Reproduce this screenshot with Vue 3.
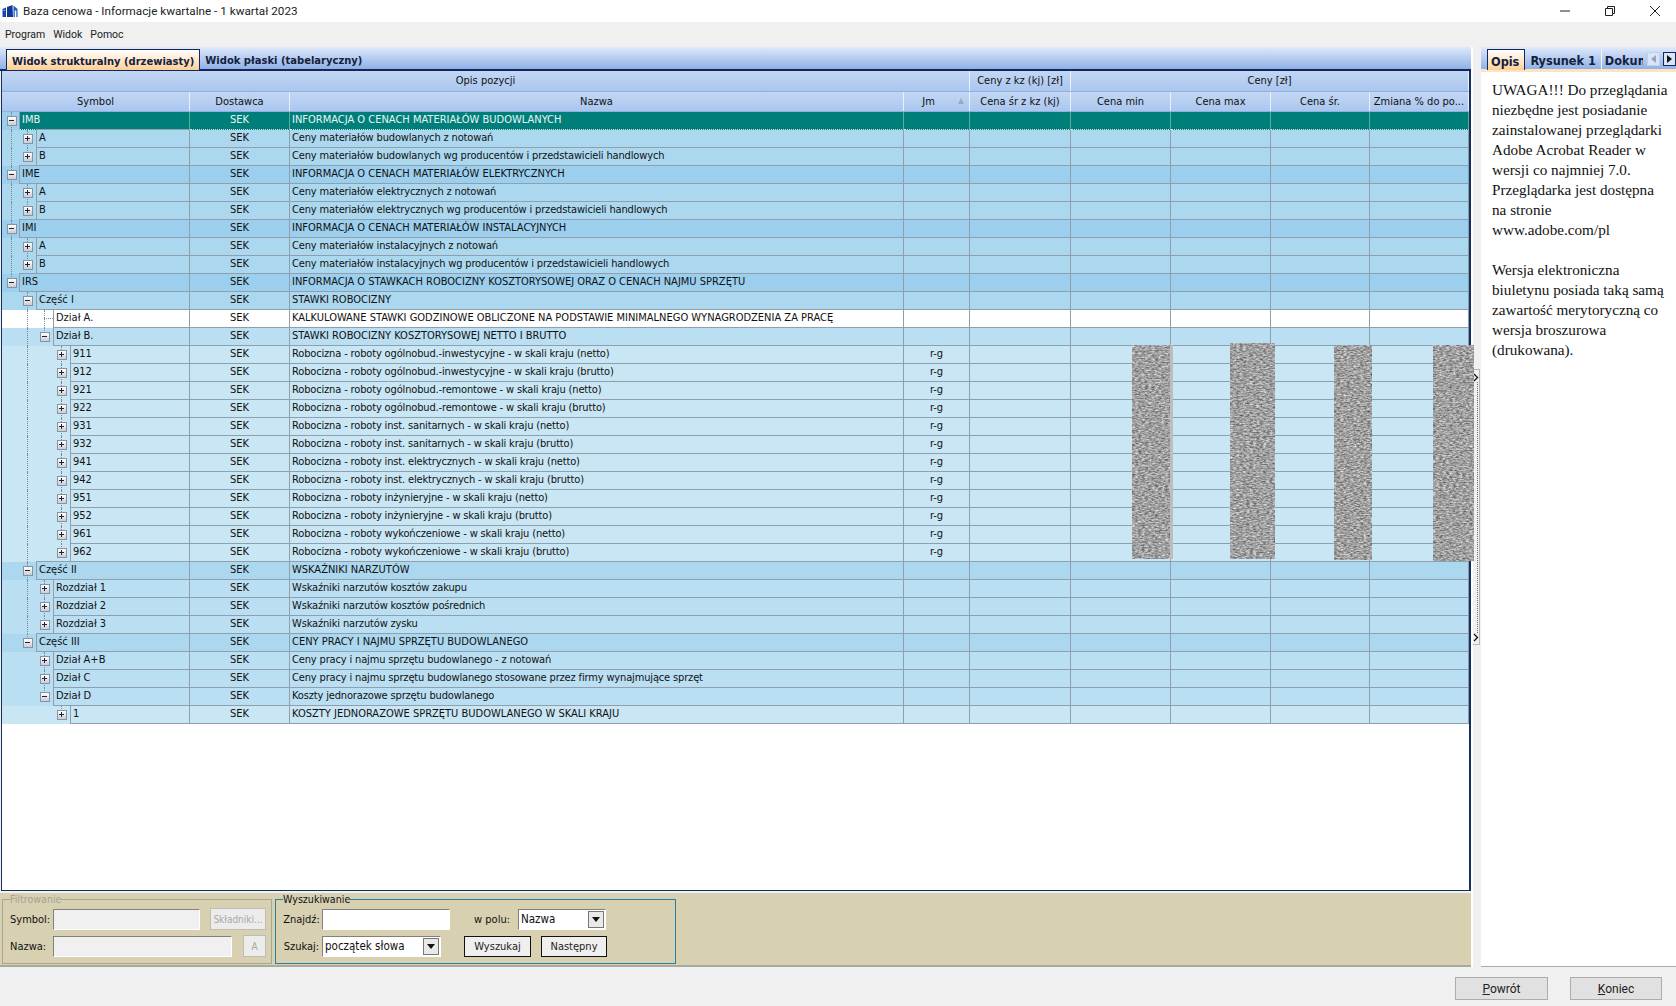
<template>
  <div class="app">
    <div class="titlebar">
      <svg class="appicon" width="17" height="14" viewBox="0 0 17 14">
        <path d="M0.5 5 4 3.5V13H0.5z" fill="#1446a8" />
        <path d="M5 3 10.5 1 11 13H5z" fill="#0f3796" />
        <path d="M11.5 1.5 15.5 5V13h-4z" fill="#1f5cc4" />
        <path d="M12.8 6.5h1.5V13h-1.5zM1.6 6.2l1.2-.6v1l-1.2.5z" fill="#fff" />
      </svg>
      <span class="apptitle">Baza cenowa - Informacje kwartalne - 1 kwartał 2023</span>
      <div class="winbtns">
        <svg width="12" height="12" viewBox="0 0 12 12"><path d="M1 6h10" stroke="#222" fill="none" /></svg>
        <svg width="12" height="12" viewBox="0 0 12 12"><path d="M1.5 3.5h7v7h-7zM3.5 3.5v-2h7v7h-2" stroke="#222" fill="none" /></svg>
        <svg width="12" height="12" viewBox="0 0 12 12"><path d="M1 1l10 10M11 1L1 11" stroke="#222" fill="none" /></svg>
      </div>
    </div>
    <div class="menubar">
      <span>Program</span><span>Widok</span><span>Pomoc</span>
    </div>

    <div class="main">
      <div class="leftcol">
        <div class="tabstrip">
          <div class="tab active">Widok strukturalny (drzewiasty)</div>
          <div class="tab">Widok płaski (tabelaryczny)</div>
        </div>

        <div class="grid">
          <div class="hrow top">
            <div class="hcell span4">Opis pozycji</div>
            <div class="hcell">Ceny z kz (kj) [zł]</div>
            <div class="hcell span4b">Ceny [zł]</div>
          </div>
          <div class="hrow">
            <div v-for="h in headers" :key="h" class="hcell" :class="{ sorted: h === 'Jm' }">{{ h }}</div>
          </div>

          <div class="body">
            <div
              v-for="(r, i) in rows"
              :key="i"
              class="row"
              :class="['lv' + r.level, { selected: i === 0, white: r.white }]"
            >
              <i v-for="g in r.guides" :key="g.k" class="guide" :class="['g' + g.k, { half: g.half }]"></i>
              <div class="cell tree">
                <span v-if="r.box" class="box" :class="{ plus: r.box === '+' }"></span>
                <i v-else class="stub"></i>
                <span class="sym">{{ r.symbol }}</span>
              </div>
              <div class="cell center">SEK</div>
              <div class="cell" :class="{ lower: !r.caps }">{{ r.name }}</div>
              <div class="cell center">{{ r.jm }}</div>
              <div class="cell"></div>
              <div class="cell"></div>
              <div class="cell"></div>
              <div class="cell"></div>
              <div class="cell"></div>
            </div>

            <svg v-for="n in 4" :key="n" class="redact" :class="'b' + n" preserveAspectRatio="none">
              <filter :id="'noise' + n" x="0" y="0" width="100%" height="100%" color-interpolation-filters="sRGB">
                <feTurbulence type="fractalNoise" baseFrequency="0.3 0.75" numOctaves="3" :seed="n * 3" />
                <feColorMatrix values="0.75 0 0 0 0.25  0.75 0 0 0 0.25  0.75 0 0 0 0.25  0 0 0 0 1" />
              </filter>
              <rect width="100%" height="100%" :filter="'url(#noise' + n + ')'" />
            </svg>
          </div>
        </div>

        <div class="filters">
          <fieldset class="group off">
            <legend>Filtrowanie</legend>
            <div class="line">
              <label class="lab1">Symbol:</label>
              <input class="inp i-sym" disabled />
              <button class="btn-off skl" disabled>Składniki...</button>
            </div>
            <div class="line">
              <label class="lab1 on">Nazwa:</label>
              <input class="inp i-naz" disabled />
              <button class="btn-off aa" disabled>A</button>
            </div>
          </fieldset>
          <fieldset class="group search">
            <legend>Wyszukiwanie</legend>
            <div class="line">
              <label class="lab2">Znajdź:</label>
              <input class="inp i-find" />
              <label class="lab3">w polu:</label>
              <div class="combo c-field">Nazwa<span class="drop"></span></div>
            </div>
            <div class="line">
              <label class="lab2">Szukaj:</label>
              <div class="combo c-mode">początek słowa<span class="drop"></span></div>
              <button class="btn b-search">Wyszukaj</button>
              <button class="btn b-next">Następny</button>
            </div>
          </fieldset>
        </div>
      </div>

      <div class="gutter">
        <div class="splitter">
          <svg width="6" height="9" viewBox="0 0 6 9"><path d="M1 1l3.5 3.5L1 8" stroke="#111" stroke-width="1.3" fill="none" /></svg>
          <div class="dots"></div>
          <svg width="6" height="9" viewBox="0 0 6 9"><path d="M1 1l3.5 3.5L1 8" stroke="#111" stroke-width="1.3" fill="none" /></svg>
        </div>
      </div>

      <div class="rightcol">
        <div class="tabstrip rtabs">
          <div class="tab active">Opis</div>
          <div class="tab sep">Rysunek 1</div>
          <div class="tab clip">Dokumenty</div>
          <div class="nav off"><i class="tri left"></i></div>
          <div class="nav"><i class="tri right"></i></div>
        </div>
        <div class="desc">{{ description }}</div>
      </div>
    </div>

    <div class="bottombar">
      <button class="wbtn"><u>P</u>owrót</button>
      <button class="wbtn"><u>K</u>oniec</button>
    </div>
  </div>
</template>

<script setup>
const headers = ['Symbol', 'Dostawca', 'Nazwa', 'Jm', 'Cena śr z kz (kj)', 'Cena min', 'Cena max', 'Cena śr.', 'Zmiana % do po...']

const description = `UWAGA!!! Do przeglądania
niezbędne jest posiadanie
zainstalowanej przeglądarki
Adobe Acrobat Reader w
wersji co najmniej 7.0.
Przeglądarka jest dostępna
na stronie
www.adobe.com/pl

Wersja elektroniczna
biuletynu posiada taką samą
zawartość merytoryczną co
wersja broszurowa
(drukowana).`

const raw = [
  [0, '-', 'IMB', 'INFORMACJA O CENACH MATERIAŁÓW BUDOWLANYCH'],
  [1, '+', 'A', 'Ceny materiałów budowlanych z notowań'],
  [1, '+', 'B', 'Ceny materiałów budowlanych wg producentów i przedstawicieli handlowych'],
  [0, '-', 'IME', 'INFORMACJA O CENACH MATERIAŁÓW ELEKTRYCZNYCH'],
  [1, '+', 'A', 'Ceny materiałów elektrycznych z notowań'],
  [1, '+', 'B', 'Ceny materiałów elektrycznych wg producentów i przedstawicieli handlowych'],
  [0, '-', 'IMI', 'INFORMACJA O CENACH MATERIAŁÓW INSTALACYJNYCH'],
  [1, '+', 'A', 'Ceny materiałów instalacyjnych z notowań'],
  [1, '+', 'B', 'Ceny materiałów instalacyjnych wg producentów i przedstawicieli handlowych'],
  [0, '-', 'IRS', 'INFORMACJA O STAWKACH ROBOCIZNY KOSZTORYSOWEJ ORAZ O CENACH NAJMU SPRZĘTU'],
  [1, '-', 'Część I', 'STAWKI ROBOCIZNY'],
  [2, '', 'Dział A.', 'KALKULOWANE STAWKI GODZINOWE OBLICZONE NA PODSTAWIE MINIMALNEGO WYNAGRODZENIA ZA PRACĘ'],
  [2, '-', 'Dział B.', 'STAWKI ROBOCIZNY KOSZTORYSOWEJ NETTO I BRUTTO'],
  [3, '+', '911', 'Robocizna - roboty ogólnobud.-inwestycyjne - w skali kraju (netto)', 'r-g'],
  [3, '+', '912', 'Robocizna - roboty ogólnobud.-inwestycyjne - w skali kraju (brutto)', 'r-g'],
  [3, '+', '921', 'Robocizna - roboty ogólnobud.-remontowe - w skali kraju (netto)', 'r-g'],
  [3, '+', '922', 'Robocizna - roboty ogólnobud.-remontowe - w skali kraju (brutto)', 'r-g'],
  [3, '+', '931', 'Robocizna - roboty inst. sanitarnych - w skali kraju (netto)', 'r-g'],
  [3, '+', '932', 'Robocizna - roboty inst. sanitarnych - w skali kraju (brutto)', 'r-g'],
  [3, '+', '941', 'Robocizna - roboty inst. elektrycznych - w skali kraju (netto)', 'r-g'],
  [3, '+', '942', 'Robocizna - roboty inst. elektrycznych - w skali kraju (brutto)', 'r-g'],
  [3, '+', '951', 'Robocizna - roboty inżynieryjne - w skali kraju (netto)', 'r-g'],
  [3, '+', '952', 'Robocizna - roboty inżynieryjne - w skali kraju (brutto)', 'r-g'],
  [3, '+', '961', 'Robocizna - roboty wykończeniowe - w skali kraju (netto)', 'r-g'],
  [3, '+', '962', 'Robocizna - roboty wykończeniowe - w skali kraju (brutto)', 'r-g'],
  [1, '-', 'Część II', 'WSKAŹNIKI NARZUTÓW'],
  [2, '+', 'Rozdział 1', 'Wskaźniki narzutów kosztów zakupu'],
  [2, '+', 'Rozdział 2', 'Wskaźniki narzutów kosztów pośrednich'],
  [2, '+', 'Rozdział 3', 'Wskaźniki narzutów zysku'],
  [1, '-', 'Część III', 'CENY PRACY I NAJMU SPRZĘTU BUDOWLANEGO'],
  [2, '+', 'Dział A+B', 'Ceny pracy i najmu sprzętu budowlanego - z notowań'],
  [2, '+', 'Dział C', 'Ceny pracy i najmu sprzętu budowlanego stosowane przez firmy wynajmujące sprzęt'],
  [2, '-', 'Dział D', 'Koszty jednorazowe sprzętu budowlanego'],
  [3, '+', '1', 'KOSZTY JEDNORAZOWE SPRZĘTU BUDOWLANEGO W SKALI KRAJU'],
]

// does the node at this level continue below row i?
const continues = (i, k) => {
  for (let j = i + 1; j < raw.length; j++) {
    if (raw[j][0] < k) return false
    if (raw[j][0] === k) return true
  }
  return false
}

const rows = raw.map(([level, box, symbol, name, jm], i) => {
  const guides = []
  for (let k = 0; k <= level; k++) {
    if (continues(i, k)) guides.push({ k, half: false })
    else if (k === level) guides.push({ k, half: true })
  }
  return {
    level,
    box,
    symbol,
    name,
    jm: jm || '',
    guides,
    white: symbol === 'Dział A.',
    caps: name === name.toUpperCase(),
  }
})
</script>

<style scoped>
.app {
  width: 1676px;
  height: 1006px;
  display: flex;
  flex-direction: column;
  font-family: "DejaVu Sans Condensed", "DejaVu Sans", sans-serif;
  font-stretch: condensed;
  font-size: 11px;
  color: #111;
  background: #f0f0f0;
  overflow: hidden;
}

.titlebar {
  height: 22px;
  background: #fff;
  display: flex;
  align-items: center;
  padding-left: 2px;
  font-family: Roboto, sans-serif;
  font-stretch: normal;
  font-size: 11.7px;
  color: #222;
}
.appicon {
  margin-right: 4px;
}
.winbtns {
  margin-left: auto;
  display: flex;
  gap: 33px;
  padding-right: 15px;
}

.menubar {
  height: 25px;
  display: flex;
  align-items: center;
  gap: 8px;
  padding-left: 5px;
  font-family: Roboto, sans-serif;
  font-stretch: normal;
  font-size: 10.5px;
  color: #222;
}

.main {
  flex: 1;
  display: flex;
  min-height: 0;
}
.leftcol {
  width: 1471px;
  display: flex;
  flex-direction: column;
}

.tabstrip {
  height: 22px;
  flex: none;
  display: flex;
  align-items: flex-end;
  padding-left: 6px;
  background: linear-gradient(#dfe9fa, #8fb1e6);
  border-bottom: 2px solid #14275a;
  box-sizing: content-box;
}
.tab {
  height: 20px;
  line-height: 23px;
  padding: 0 5px;
  font-family: "DejaVu Sans Condensed", "DejaVu Sans", sans-serif;
  font-weight: bold;
  font-size: 11.1px;
  color: #14213f;
  white-space: nowrap;
}
.tab.active {
  background: linear-gradient(#fff, #fdcf95);
  border: 1px solid #14275a;
  border-bottom: none;
  margin-bottom: -1px;
}

.grid {
  flex: none;
  height: 820px;
  background: #fff;
  border-left: 1px solid #14305e;
  border-right: 2px solid #14305e;
  border-bottom: 1px solid #14305e;
  margin-left: 1px;
  box-sizing: border-box;
  width: 1470px;
  display: flex;
  flex-direction: column;
}
.hrow {
  height: 19px;
  display: grid;
  grid-template-columns: 188px 100px 614px 66px 101px 100px 100px 99px 99px;
  background: linear-gradient(#c3d7f4, #aac6ee);
  border-bottom: 1px solid #8fb0e0;
  flex: none;
}
.hrow.top {
  height: 20px;
}
.hcell {
  border-right: 1px solid #eaf1fb;
  text-align: center;
  line-height: 19px;
  white-space: nowrap;
  overflow: hidden;
  position: relative;
}
.span4 {
  grid-column: span 4;
}
.span4b {
  grid-column: span 4;
}
.sorted {
  padding-right: 16px;
  box-sizing: border-box;
}
.sorted::after {
  content: "";
  position: absolute;
  right: 5px;
  top: 6px;
  border: 3.5px solid transparent;
  border-bottom: 6px solid #99a8c0;
  border-top: none;
}

.body {
  position: relative;
  flex: 1;
}
.row {
  height: 18px;
  display: grid;
  grid-template-columns: 188px 100px 614px 66px 101px 100px 100px 99px 99px;
  position: relative;
}
.lv0 { background: #9ccfed; }
.lv1 { background: #acd8ef; }
.lv2 { background: #bbdff2; }
.lv3 { background: #c9e6f4; }
.row.white { background: #fff; }
.cell {
  border-right: 1px solid #8f9fae;
  border-bottom: 1px solid #8f9fae;
  line-height: 16px;
  padding-left: 2px;
  white-space: nowrap;
  overflow: hidden;
  box-sizing: border-box;
}
.lower {
  letter-spacing: -0.15px;
}
.center {
  text-align: center;
  padding-left: 0;
}
.tree {
  border-bottom: none;
  padding: 0;
  display: flex;
  overflow: visible;
  position: relative;
}
.sym {
  flex: 1;
  padding-left: 2px;
  border-left: 1px solid #8f9fae;
  border-bottom: 1px solid #8f9fae;
  box-shadow: 0 -1px 0 #8f9fae;
}
.box {
  width: 8px;
  height: 8px;
  flex: none;
  margin-top: 4px;
  border: 1px solid #8793a3;
  background: linear-gradient(#fff, #c9ccd2);
  box-sizing: content-box;
  position: relative;
}
.box::before {
  content: "";
  position: absolute;
  left: 1px;
  top: 3px;
  width: 5px;
  height: 1px;
  background: #223;
}
.box.plus::after {
  content: "";
  position: absolute;
  left: 3px;
  top: 1px;
  width: 1px;
  height: 5px;
  background: #223;
}
.lv0 .box { margin-left: 5px; margin-right: 2px; }
.lv1 .box { margin-left: 21px; margin-right: 3px; }
.lv2 .box { margin-left: 38px; margin-right: 3px; }
.lv3 .box { margin-left: 55px; margin-right: 3px; }
.stub {
  width: 9px;
  margin-left: 42px;
  margin-top: 8px;
  height: 0;
  border-top: 1px dotted #7d8a96;
}

.guide {
  position: absolute;
  top: 0;
  bottom: 0;
  width: 0;
  border-left: 1px dotted #7d8a96;
}
.guide.half {
  bottom: 9px;
}
.g0 { left: 9px; }
.g1 { left: 25px; }
.g2 { left: 42px; }
.g3 { left: 59px; }

.row.selected .cell {
  background: #007f7a;
  color: #eaf6f5;
  border-right-color: #5fa9a5;
  border-bottom: 1px dotted #cfe6e4;
}
.row.selected .tree {
  background: none;
  border-bottom: none;
}
.row.selected .sym {
  background: #007f7a;
  color: #eaf6f5;
  border-bottom: 1px dotted #cfe6e4;
  box-shadow: none;
}

.redact {
  position: absolute;
  z-index: 2;
  border-right: 3px solid #bdbdbd;
}
.b1 { left: 1130px; top: 233px; width: 38px; height: 214px; }
.b2 { left: 1228px; top: 231px; width: 45px; height: 216px; border-right: none; }
.b3 { left: 1332px; top: 233px; width: 38px; height: 215px; border-right: none; }
.b4 { left: 1431px; top: 233px; width: 41px; height: 216px; border-right: none; }

.filters {
  flex: 1;
  margin-top: 2px;
  background: #d7d0b1;
  border-bottom: 2px solid #a9a9a0;
  display: flex;
  gap: 3px;
  padding: 0 0 0 2px;
  box-sizing: border-box;
}
.group {
  margin: 0;
  height: 71px;
  padding: 0 5px;
  box-sizing: border-box;
  border: 1px solid #a9a68e;
  min-width: 0;
}
.group.off {
  width: 270px;
}
.group.search {
  width: 401px;
  border-color: #2c7ea0;
}
legend {
  padding: 0;
  margin-left: 2px;
  font-size: 10.6px;
  line-height: 12px;
}
.off legend {
  color: #a6a390;
}
.line {
  display: flex;
  align-items: center;
  height: 22px;
  margin-bottom: 5px;
}
.line:first-of-type {
  margin-top: 3px;
}
.lab1 {
  width: 45px;
  flex: none;
  padding-left: 2px;
  box-sizing: border-box;
}
.lab2 {
  width: 41px;
  flex: none;
  text-align: center;
}
.lab3 {
  margin-left: 21px;
  flex: none;
  text-align: right;
  padding-right: 8px;
  box-sizing: content-box;
  width: 39px;
}
.inp {
  height: 21px;
  box-sizing: border-box;
  background: #fff;
  border: 1px solid;
  border-color: #808080 #fff #fff #808080;
  border-radius: 0;
  padding: 0;
  outline: none;
}
.inp:disabled {
  background: #f0f0f0;
}
.i-sym { width: 147px; }
.i-naz { width: 181px; }
.i-find { width: 128px; }
.btn-off {
  height: 22px;
  background: #ececec;
  border: 1px solid #bdbdb5;
  border-radius: 0;
  padding: 0;
  color: #a8a8a8;
  font: inherit;
  font-size: 10px;
}
.skl { width: 57px; margin-left: 10px; }
.aa { width: 23px; margin-left: 11px; }
.combo {
  height: 21px;
  box-sizing: border-box;
  background: #fff;
  border: 1px solid;
  border-color: #808080 #fff #fff #808080;
  display: flex;
  align-items: center;
  padding-left: 2px;
  position: relative;
  font-size: 11.5px;
}
.c-field { width: 88px; }
.c-mode { width: 119px; }
.drop {
  margin-left: auto;
  width: 16px;
  height: 17px;
  margin-right: 1px;
  background: #e9e9e9;
  border: 1px solid #777;
  box-sizing: border-box;
  position: relative;
}
.drop::after {
  content: "";
  position: absolute;
  left: 3px;
  top: 5px;
  border: 4px solid transparent;
  border-top: 5px solid #111;
  border-bottom: none;
}
.btn {
  height: 21px;
  background: #efefef;
  border: 1px solid #111;
  border-radius: 0;
  padding: 0;
  font: inherit;
  color: #222;
}
.b-search { width: 67px; margin-left: 23px; }
.b-next { width: 66px; margin-left: 10px; }

.gutter {
  width: 10px;
  flex: none;
  background: linear-gradient(90deg, #fff 2px, #f0f0f0 2px);
}
.splitter {
  margin: 322px 0 0 2px;
  width: 7px;
  height: 276px;
  box-sizing: border-box;
  border: 1px solid #b5b5b5;
  border-left: none;
  display: flex;
  flex-direction: column;
  align-items: flex-start;
  padding: 3px 0 2px;
}
.dots {
  flex: 1;
  margin-left: 4px;
  border-left: 1px dotted #5a6f8e;
}

.rightcol {
  flex: 1;
  display: flex;
  flex-direction: column;
  background: #fff;
  border-bottom: 1px solid #aaa;
  overflow: hidden;
}
.rtabs {
  padding-left: 6px;
  border-bottom: 3px solid #fde3c2;
  height: 22px;
  position: relative;
}
.rtabs .tab {
  font-size: 12.6px;
  padding: 0 5px 0 3px;
}
.rtabs .sep {
  border-right: 1px solid #f2f6fd;
  padding: 0 5px;
}
.rtabs .clip {
  width: 33px;
  overflow: hidden;
  box-sizing: content-box;
  margin-right: 3px;
}
.nav {
  width: 13px;
  height: 14px;
  margin-left: 3px;
  margin-bottom: 3px;
  border: 1px solid #14275a;
  background: #d8e4f7;
  box-sizing: border-box;
  flex: none;
  display: flex;
  align-items: center;
  justify-content: center;
}
.nav.off {
  border-color: #c2cfe4;
  margin-left: 1px;
}
.tri {
  border: 4px solid transparent;
}
.tri.left {
  border-right: 5px solid #9aa6b8;
  border-left: none;
}
.tri.right {
  border-left: 5px solid #111;
  border-right: none;
}
.desc {
  padding: 8px 0 0 11px;
  font-family: "Liberation Serif", serif;
  font-stretch: normal;
  font-size: 15.2px;
  line-height: 20px;
  white-space: pre;
  color: #111;
}

.bottombar {
  height: 39px;
  flex: none;
  display: flex;
  justify-content: flex-end;
  gap: 22px;
  padding: 10px 14px 0 0;
  box-sizing: border-box;
}
.wbtn {
  width: 93px;
  height: 23px;
  background: #e1e1e1;
  border: 1px solid #adadad;
  border-radius: 0;
  padding: 0;
  font-family: Roboto, sans-serif;
  font-stretch: normal;
  font-size: 12px;
  color: #222;
}
.wbtn + .wbtn {
  width: 92px;
}
</style>
